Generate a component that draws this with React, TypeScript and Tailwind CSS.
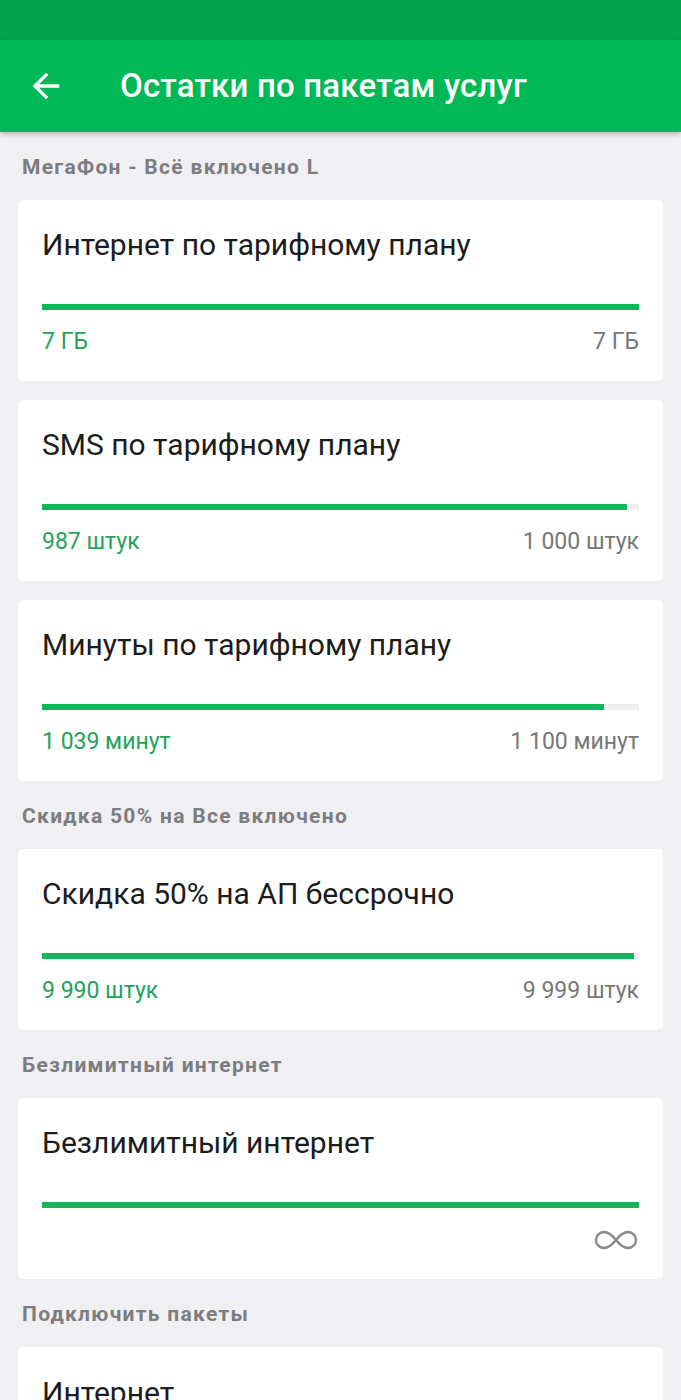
import React from "react";

type Pack = {
  title: string;
  left?: string;
  total?: string;
  percent: number;
  unlimited?: boolean;
};

type Section = {
  name: string;
  packs: Pack[];
};

const sections: Section[] = [
  {
    name: "МегаФон - Всё включено L",
    packs: [
      { title: "Интернет по тарифному плану", left: "7 ГБ", total: "7 ГБ", percent: 100 },
      { title: "SMS по тарифному плану", left: "987 штук", total: "1 000 штук", percent: 98 },
      { title: "Минуты по тарифному плану", left: "1 039 минут", total: "1 100 минут", percent: 94.2 },
    ],
  },
  {
    name: "Скидка 50% на Все включено",
    packs: [
      { title: "Скидка 50% на АП бессрочно", left: "9 990 штук", total: "9 999 штук", percent: 99.2 },
    ],
  },
  {
    name: "Безлимитный интернет",
    packs: [{ title: "Безлимитный интернет", percent: 100, unlimited: true }],
  },
];

function Infinity() {
  return (
    <svg width="46" height="24" viewBox="0 0 46 24" fill="none">
      <path
        d="M23 12c-4-5-7.5-8-12-8a8 8 0 0 0 0 16c4.5 0 8-3 12-8zm0 0c4 5 7.5 8 12 8a8 8 0 0 0 0-16c-4.5 0-8 3-12 8z"
        stroke="#8a8a8a"
        strokeWidth="2.4"
      />
    </svg>
  );
}

function PackCard({ pack }: { pack: Pack }) {
  return (
    <div className="bg-white rounded-[5px] mx-[18px] px-[24px] pt-[29px] pb-[26px]">
      <div className="text-[30px] leading-[32px] text-[#1c1c1c]">{pack.title}</div>
      <div className="mt-[43px] h-[6px] bg-[#eeeef1]">
        <div className="h-full bg-[#14b45a]" style={{ width: `${pack.percent}%` }} />
      </div>
      <div className="mt-[19px] h-[26px] flex justify-between items-center text-[23px] leading-[26px]">
        {pack.unlimited ? (
          <>
            <span />
            <Infinity />
          </>
        ) : (
          <>
            <span className="text-[#1ea35c]">{pack.left}</span>
            <span className="text-[#777777]">{pack.total}</span>
          </>
        )}
      </div>
    </div>
  );
}

function Label({ children }: { children: React.ReactNode }) {
  return (
    <div className="px-[22px] pt-[23px] pb-[21px] text-[21px] leading-[24px] font-bold tracking-[1.3px] text-[#7d7d80]">
      {children}
    </div>
  );
}

export default function App() {
  return (
    <div
      className="w-[681px] h-[1400px] overflow-hidden bg-[#f0eff2]"
      style={{ fontFamily: "Roboto, 'Noto Sans', sans-serif" }}
    >
      <div className="h-[40px] bg-[#00a24b]" />
      <div className="relative z-10 h-[92px] bg-[#00b956] flex items-center shadow-[0_2px_5px_rgba(0,0,0,0.25)]">
        <svg className="ml-[26px]" width="40" height="40" viewBox="0 0 24 24" fill="#ffffff">
          <path d="M20 11H7.83l5.59-5.59L12 4l-8 8 8 8 1.41-1.41L7.83 13H20v-2z" />
        </svg>
        <div className="ml-[54px] text-[33px] font-medium text-white tracking-[0.2px]">
          Остатки по пакетам услуг
        </div>
      </div>

      {sections.map((s) => (
        <div key={s.name}>
          <Label>{s.name}</Label>
          <div className="flex flex-col gap-[19px]">
            {s.packs.map((p) => (
              <PackCard key={p.title} pack={p} />
            ))}
          </div>
        </div>
      ))}

      <Label>Подключить пакеты</Label>
      <div className="bg-white rounded-[5px] mx-[18px] px-[24px] pt-[30px] h-[200px]">
        <div className="text-[30px] leading-[32px] text-[#1c1c1c]">Интернет</div>
      </div>
    </div>
  );
}
